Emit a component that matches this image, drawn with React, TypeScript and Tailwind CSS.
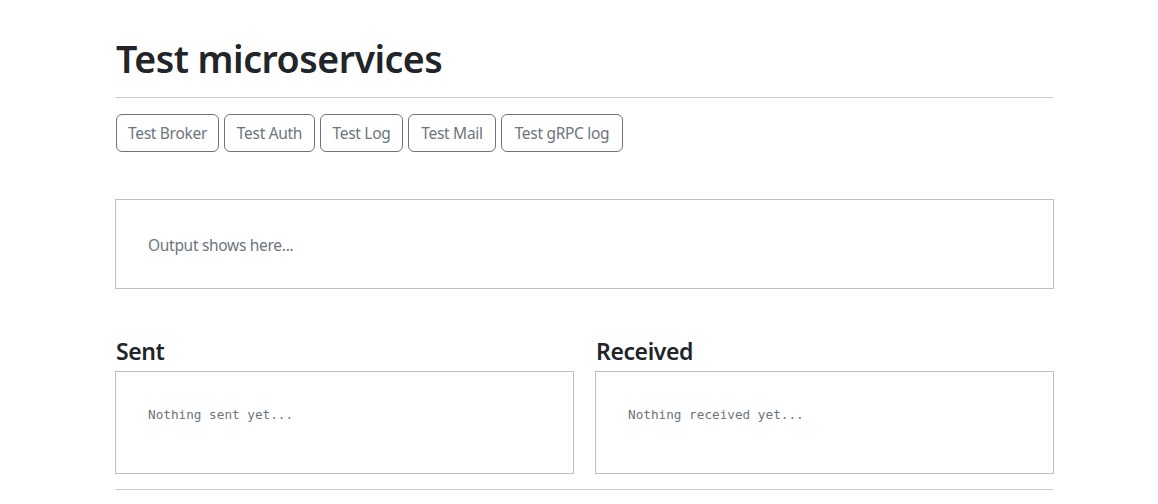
import React from "react";

const buttons: { label: string; w: string }[] = [
  { label: "Test Broker", w: "w-[103px]" },
  { label: "Test Auth", w: "w-[91px]" },
  { label: "Test Log", w: "w-[83px]" },
  { label: "Test Mail", w: "w-[88px]" },
  { label: "Test gRPC log", w: "w-[122px]" },
];

export default function App() {
  return (
    <div
      className="min-h-[504px] bg-white text-[#212529]"
      style={{ fontFamily: '"Noto Sans", "Open Sans", sans-serif' }}
    >
      <div className="ml-[116px] flex w-[937px] flex-col">
        <h1 className="mt-[36px] text-[37.5px] font-semibold leading-[45px] tracking-[-0.5px]">
          Test microservices
        </h1>
        <div className="mt-4 h-px bg-[#c8c9ca]" />
        <div className="mt-4 flex gap-[5px]">
          {buttons.map((b) => (
            <button
              key={b.label}
              className={`${b.w} flex h-[38px] items-center justify-center rounded-[6px] border border-[#6c757d] pt-[2px] text-[15.5px] tracking-[-0.3px] text-[#6c757d]`}
            >
              {b.label}
            </button>
          ))}
        </div>
        <div className="mt-12 px-8 pb-[31px] pt-[33px] outline outline-1 outline-[#c0c0c0]">
          <span className="text-[15.5px] leading-6 tracking-[-0.3px] text-[#6c757d]">
            Output shows here...
          </span>
        </div>
        <div className="mt-[49px] grid grid-cols-2 gap-[23px]">
          {[
            { title: "Sent", text: "Nothing sent yet..." },
            { title: "Received", text: "Nothing received yet..." },
          ].map((c) => (
            <div key={c.title} className="flex flex-col">
              <h4 className="text-[23px] font-semibold leading-[29px] tracking-[-0.4px]">
                {c.title}
              </h4>
              <div className="mt-[6px] p-8 outline outline-1 outline-[#c0c0c0]">
                <pre
                  className="mb-4 text-[12.7px] leading-[21px] text-[#6c757d]"
                  style={{ fontFamily: '"DejaVu Sans Mono", "Liberation Mono", monospace' }}
                >
                  {c.text}
                </pre>
              </div>
            </div>
          ))}
        </div>
        <div className="mt-4 h-px bg-[#c8c9ca]" />
      </div>
    </div>
  );
}
